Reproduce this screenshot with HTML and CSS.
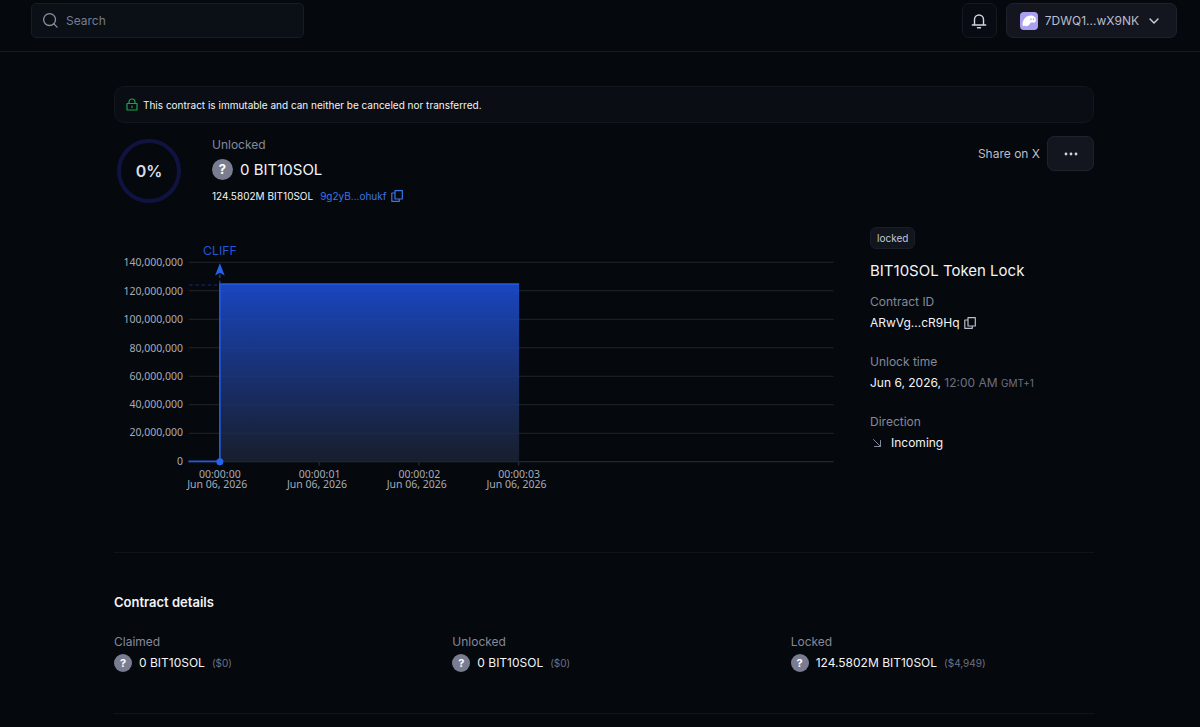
FILE: index.html
```html
<!DOCTYPE html>
<html lang="en">
<head>
  <meta charset="UTF-8" />
  <meta name="viewport" content="width=device-width, initial-scale=1.0" />
  <title>BIT10SOL Token Lock</title>
  <link rel="stylesheet" href="styles.css">
</head>
<body>
  <header class="topbar">
    <label class="search">
      <svg class="search-icon" viewBox="0 0 18 18" aria-hidden="true">
        <circle cx="8" cy="8" r="6.3" />
        <path d="M12.6 12.6 16 16" />
      </svg>
      <input type="search" placeholder="Search" aria-label="Search">
    </label>
    <div class="topbar-actions">
      <button class="btn btn-bell" type="button" aria-label="Notifications">
        <svg class="bell-icon" viewBox="0 0 18 18" aria-hidden="true">
          <path d="M4.500 13V7.500a4.500 4.500 0 0 1 9 0V13M2.300 13h13.400M7.500 15.800h3" />
        </svg>
      </button>
      <button class="btn btn-wallet" type="button">
        <svg class="wallet-icon" viewBox="0 0 18 18" aria-hidden="true">
          <rect width="18" height="18" rx="4" fill="#ab9ff2" />
          <path fill="#fff" d="M2.500 12.300C2.700 8 6 3.600 10.600 3.600c3.200 0 5.300 1.800 5.300 4.400 0 1.700-.9 2.800-2.200 2.800-.7 0-1.200-.2-1.600-.5-.5.4-1 .5-1.600.4-.9 2-2.600 3.600-4 3.600-.8 0-1.200-.4-1.200-1.100-.5.6-1.100 1-1.600 1-.7 0-1.200-.8-1.200-1.900z" />
          <ellipse cx="11" cy="7.200" rx=".7" ry="1" fill="#ab9ff2" />
          <ellipse cx="13.500" cy="7.200" rx=".7" ry="1" fill="#ab9ff2" />
        </svg>
        <span>7DWQ1...wX9NK</span>
        <svg class="chevron" viewBox="0 0 12 12" aria-hidden="true">
          <path d="M2 4l4 4 4-4" />
        </svg>
      </button>
    </div>
  </header>

  <main class="page">
    <div class="notice">
      <svg class="lock-icon" viewBox="0 0 12 13" aria-hidden="true">
        <path d="M1 5.500h10v6.500H1zM3 5.500V4a3 3 0 0 1 6 0v1.500M6 8v1.500" />
      </svg>
      <span>This contract is immutable and can neither be canceled nor transferred.</span>
    </div>

    <section class="summary">
      <div class="ring">0%</div>
      <div class="summary-text">
        <div class="label">Unlocked</div>
        <div class="amount"><span class="token token-lg">?</span>0 BIT10SOL</div>
        <div class="supply">
          <span>124.5802M BIT10SOL</span>
          <a href="#token">9g2yB...ohukf</a>
          <button class="copy copy-blue" type="button" aria-label="Copy token address">
            <svg viewBox="0 0 12 12" aria-hidden="true"><path d="M4 .7h7.300v8.300H4zM4 3H.8v8.300h7.500V9" /></svg>
          </button>
        </div>
      </div>
      <div class="summary-actions">
        <a class="share" href="#share">Share on X</a>
        <button class="btn btn-more" type="button" aria-label="More">
          <svg viewBox="0 0 14 4" aria-hidden="true">
            <circle cx="2" cy="2" r="1.400" /><circle cx="7" cy="2" r="1.400" /><circle cx="12" cy="2" r="1.400" />
          </svg>
        </button>
      </div>
    </section>

    <section class="overview">
      <svg class="chart" viewBox="0 0 832 304" role="img" aria-label="Unlock schedule">
        <defs>
          <linearGradient id="area" x1="0" y1="0" x2="0" y2="1">
            <stop offset="0" stop-color="#1c4ed8" stop-opacity=".88" />
            <stop offset="1" stop-color="#1c2333" stop-opacity=".8" />
          </linearGradient>
        </defs>
        <g class="grid">
          <path d="M86 30H822M86 62.600H822M86 95.100H822M86 127.700H822M86 160.300H822M86 192.900H822M86 225.400H822" />
          <path class="axis" d="M86 258H822M120.500 258v4M234.500 258v4M348.500 258v4M462.500 258v4" />
        </g>
        <g class="y-labels">
          <text x="79" y="34">140,000,000</text>
          <text x="79" y="67">120,000,000</text>
          <text x="79" y="99">100,000,000</text>
          <text x="79" y="132">80,000,000</text>
          <text x="79" y="164">60,000,000</text>
          <text x="79" y="197">40,000,000</text>
          <text x="79" y="229">20,000,000</text>
          <text x="79" y="262">0</text>
        </g>
        <path fill="url(#area)" d="M121 55H463V258H121z" />
        <path class="guide" d="M86 56H120" />
        <path class="guide guide-cliff" d="M121 44V55" />
        <path class="line" d="M85 257.500H121V55H463" />
        <circle cx="121" cy="258" r="4" fill="#2563eb" />
        <path fill="#2563eb" d="M121 31l5.500 14-5.500-3-5.500 3z" />
        <text class="cliff" x="121" y="22">CLIFF</text>
        <g class="x-labels">
          <text x="121" y="276">00:00:00</text><text x="118" y="288">Jun 06, 2026</text>
          <text x="235" y="276">00:00:01</text><text x="232" y="288">Jun 06, 2026</text>
          <text x="349" y="276">00:00:02</text><text x="346" y="288">Jun 06, 2026</text>
          <text x="463" y="276">00:00:03</text><text x="460" y="288">Jun 06, 2026</text>
        </g>
      </svg>

      <aside class="info">
        <span class="badge">locked</span>
        <h1>BIT10SOL Token Lock</h1>
        <dl>
          <div>
            <dt>Contract ID</dt>
            <dd class="with-icon">ARwVg...cR9Hq
              <button class="copy" type="button" aria-label="Copy contract ID">
                <svg viewBox="0 0 12 12" aria-hidden="true"><path d="M4 .7h7.300v8.300H4zM4 3H.8v8.300h7.500V9" /></svg>
              </button>
            </dd>
          </div>
          <div>
            <dt>Unlock time</dt>
            <dd>Jun 6, 2026, <span class="time">12:00 AM</span> <span class="zone">GMT+1</span></dd>
          </div>
          <div>
            <dt>Direction</dt>
            <dd class="direction">
              <svg class="arrow" viewBox="0 0 14 14" aria-hidden="true"><path d="M3.500 3.500l7 7M10.500 4.500v6h-6" /></svg>
              Incoming
            </dd>
          </div>
        </dl>
      </aside>
    </section>

    <section class="details">
      <h2>Contract details</h2>
      <div class="details-grid">
        <div>
          <div class="label">Claimed</div>
          <div class="value"><span class="token">?</span>0 BIT10SOL <span class="usd">($0)</span></div>
        </div>
        <div>
          <div class="label">Unlocked</div>
          <div class="value"><span class="token">?</span>0 BIT10SOL <span class="usd">($0)</span></div>
        </div>
        <div>
          <div class="label">Locked</div>
          <div class="value"><span class="token">?</span>124.5802M BIT10SOL <span class="usd">($4,949)</span></div>
        </div>
      </div>
    </section>
  </main>
</body>
</html>
```
FILE: styles.css
```css
* {
  box-sizing: border-box;
}

body {
  margin: 0;
  background: #05080d;
  color: #f3f4f6;
  font-family: Inter, "Liberation Sans", sans-serif;
  font-size: 12px;
  line-height: 18px;
}

button,
input {
  font: inherit;
  color: inherit;
}

button {
  cursor: pointer;
}

svg {
  display: block;
  fill: none;
  stroke-linecap: round;
  stroke-linejoin: round;
}

a {
  color: inherit;
  text-decoration: none;
}

/* top bar */
.topbar {
  display: flex;
  align-items: center;
  justify-content: space-between;
  padding: 3px 23px 13px 31px;
  border-bottom: 1px solid #171a20;
}

.search {
  display: flex;
  align-items: center;
  gap: 7px;
  width: 273px;
  height: 35px;
  padding: 0 10px;
  background: #0b0f16;
  border: 1px solid #181c25;
  border-radius: 5px;
}

.search input {
  flex: 1;
  min-width: 0;
  padding: 0;
  border: 0;
  outline: 0;
  background: none;
}

.search input::placeholder {
  color: #777c91;
  opacity: 1;
}

.search-icon {
  width: 17px;
  height: 17px;
  stroke: #8b90a3;
  stroke-width: 1.4;
}

.topbar-actions {
  display: flex;
  gap: 9px;
}

.btn {
  display: flex;
  align-items: center;
  justify-content: center;
  height: 35px;
  padding: 0;
  background: #13161f;
  border: 1px solid #1e222d;
  border-radius: 7px;
  color: #b9bdcc;
}

.btn-bell {
  width: 35px;
  background: #080b11;
  border-color: #151922;
}

.bell-icon {
  width: 18px;
  height: 18px;
  stroke: #d1d5e0;
  stroke-width: 1.4;
}

.btn-wallet {
  gap: 7px;
  padding: 0 16px 0 13px;
}

.wallet-icon {
  width: 18px;
  height: 18px;
}

.chevron {
  width: 12px;
  height: 12px;
  margin-left: 2px;
  stroke: #d1d5e0;
  stroke-width: 1.4;
}

/* page */
.page {
  box-sizing: content-box;
  max-width: 980px;
  margin: 0 auto;
  padding-left: 8px;
}

.notice {
  display: flex;
  align-items: center;
  gap: 5px;
  height: 37px;
  margin-top: 34px;
  padding: 0 11px;
  background: #0a0e14;
  border: 1px solid #12161e;
  border-radius: 10px;
  font-size: 10px;
}

.lock-icon {
  width: 12px;
  height: 13px;
  stroke: #16a34a;
  stroke-width: 1.2;
}

.label,
dt {
  color: #83889b;
}

.summary {
  display: flex;
  align-items: flex-start;
  padding: 13px 0 0 3px;
}

.ring {
  display: flex;
  align-items: center;
  justify-content: center;
  width: 64px;
  height: 64px;
  margin-top: 3px;
  border: 4px solid #101340;
  border-radius: 50%;
  color: #d9dde8;
  font-size: 16px;
  font-weight: 600;
}

.summary-text {
  margin-left: 31px;
}

.amount {
  display: flex;
  align-items: center;
  gap: 7px;
  margin: 5px 0 7px;
  font-size: 15px;
  line-height: 21px;
}

.token {
  display: inline-flex;
  align-items: center;
  justify-content: center;
  width: 18px;
  height: 18px;
  margin-right: 7px;
  background: #7a7d90;
  border-radius: 50%;
  color: #fff;
  font-size: 11px;
  font-weight: 700;
}

.token-lg {
  width: 21px;
  height: 21px;
  margin-right: 0;
  font-size: 13px;
}

.supply {
  display: flex;
  align-items: center;
  font-size: 10px;
}

.supply a {
  margin: 0 5px 0 7px;
  color: #3b76e8;
}

.copy {
  padding: 0;
  background: none;
  border: 0;
}

.copy svg {
  width: 12px;
  height: 12px;
  stroke: #b9bdcc;
  stroke-width: 1.2;
}

.copy-blue svg {
  stroke: #3b76e8;
}

.summary-actions {
  display: flex;
  align-items: center;
  gap: 7px;
  margin-left: auto;
  color: #b9bdcc;
}

.btn-more {
  width: 47px;
}

.btn-more svg {
  width: 14px;
  height: 4px;
  fill: #d1d5e0;
}

/* chart and side info */
.overview {
  display: grid;
  grid-template-columns: minmax(0, 1fr) 224px;
  gap: 28px;
  padding: 22px 0 50px;
  border-bottom: 1px solid #11151b;
}

.chart {
  width: 100%;
  margin-top: 9px;
}

.chart text {
  fill: #a8acba;
  font-family: "Noto Sans", sans-serif;
  font-size: 12px;
}

.chart .cliff {
  fill: #2457d6;
  font-family: Inter, sans-serif;
  font-size: 14px;
  text-anchor: middle;
}

.y-labels {
  text-anchor: end;
}

.x-labels {
  text-anchor: middle;
}

.grid {
  stroke: #20242d;
  stroke-width: 1.2;
}

.axis {
  stroke: #2b313c;
}

.guide {
  stroke: #1c2f8a;
  stroke-dasharray: 4 3;
  stroke-linecap: butt;
}

.guide-cliff {
  stroke: #2563eb;
}

.line {
  stroke: #2457dc;
  stroke-width: 2;
  stroke-linecap: butt;
}

.badge {
  display: inline-block;
  padding: 1px 6px;
  background: #11151d;
  border: 1px solid #191e28;
  border-radius: 6px;
  color: #c3c7d4;
  font-size: 10px;
}

.info h1 {
  margin: 11px 0;
  font-size: 15px;
  font-weight: 400;
  line-height: 22px;
}

.info dl {
  display: grid;
  gap: 21px;
  margin: 0;
}

.info dd {
  margin: 3px 0 0;
}

.time,
.zone,
.usd {
  color: #6b7084;
}

.zone,
.usd {
  font-size: 10px;
}

.with-icon {
  display: flex;
  align-items: center;
  gap: 4px;
}

.direction {
  display: flex;
  align-items: center;
  gap: 7px;
}

.arrow {
  width: 14px;
  height: 14px;
  stroke: #83889b;
}

/* contract details */
.details {
  padding: 40px 0 41px;
  border-bottom: 1px solid #11151b;
}

.details h2 {
  margin: 0 0 22px;
  font-size: 13px;
  font-weight: 600;
  line-height: 18px;
}

.details-grid {
  display: grid;
  grid-template-columns: repeat(3, 1fr);
  gap: 35px;
}

.value {
  display: flex;
  align-items: center;
  margin-top: 3px;
}

.usd {
  margin-left: 7px;
}
```
